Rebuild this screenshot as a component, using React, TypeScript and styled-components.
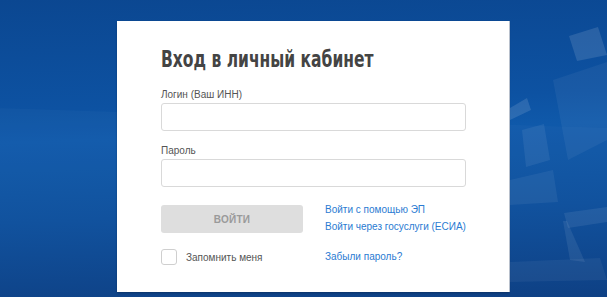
import styled, { createGlobalStyle } from "styled-components";

const GlobalStyle = createGlobalStyle`
  html, body {
    margin: 0;
    padding: 0;
  }
  body {
    font-family: "Liberation Sans", Arial, sans-serif;
  }
`;

export default function App() {
  return (
    <>
      <GlobalStyle />
      <Page>
        <Decor viewBox="0 0 607 297" preserveAspectRatio="none">
          <polygon points="0,108 607,128 607,297 0,297" fill="rgba(255,255,255,0.025)" />
          <polygon points="569,36 598,27 607,55 577,61" fill="rgba(255,255,255,0.12)" />
          <polygon points="553,80 607,62 607,140 568,160" fill="rgba(255,255,255,0.05)" />
          <polygon points="510,108 527,98 531,110 510,120" fill="rgba(255,255,255,0.12)" />
          <polygon points="522,130 544,124 550,160 526,167" fill="rgba(255,255,255,0.07)" />
          <polygon points="510,180 553,170 558,202 510,205" fill="rgba(255,255,255,0.06)" />
          <polygon points="564,213 607,207 607,222 568,228" fill="rgba(255,255,255,0.08)" />
          <polygon points="563,221 567,221 585,262 570,260" fill="rgba(255,255,255,0.08)" />
          <polygon points="510,262 600,258 607,280 510,282" fill="rgba(255,255,255,0.05)" />
        </Decor>
        <Card>
          <Title>Вход в личный кабинет</Title>
          <Field>
            <Label>Логин (Ваш ИНН)</Label>
            <Input type="text" />
          </Field>
          <Field>
            <Label>Пароль</Label>
            <Input type="password" />
          </Field>
          <Actions>
            <SubmitButton disabled>ВОЙТИ</SubmitButton>
            <LinkStack>
              <Link href="#">Войти с помощью ЭП</Link>
              <Link href="#">Войти через госуслуги (ЕСИА)</Link>
            </LinkStack>
            <Remember>
              <CheckBox />
              Запомнить меня
            </Remember>
            <Link href="#">Забыли пароль?</Link>
          </Actions>
        </Card>
      </Page>
    </>
  );
}

const Page = styled.div`
  position: relative;
  width: 607px;
  height: 297px;
  overflow: hidden;
  box-sizing: border-box;
  padding: 21px 0 0 117px;
  background: linear-gradient(
    178deg,
    #0b4791 0%,
    #0d52a2 35%,
    #0f59aa 45%,
    #0c4e9c 70%,
    #093c82 100%
  );
`;

const Decor = styled.svg`
  position: absolute;
  inset: 0;
  width: 607px;
  height: 297px;
`;

const Card = styled.div`
  position: relative;
  width: 392px;
  height: 271px;
  box-sizing: border-box;
  padding: 24px 43px 0 44px;
  background: #fff;
  box-shadow: 1px 0 0 #b8c0cc, 0 1px 2px rgba(0, 0, 0, 0.25);
`;

/* no condensed face installed: squeeze DejaVu Condensed to the reference width */
const Title = styled.h1`
  margin: 0 0 16px;
  font-family: "DejaVu Sans Condensed", "DejaVu Sans", sans-serif;
  font-weight: bold;
  font-size: 23px;
  line-height: 28px;
  color: #444;
  white-space: nowrap;
  transform: scaleX(0.75);
  transform-origin: left center;
`;

const Field = styled.div`
  display: flex;
  flex-direction: column;
  margin-bottom: 14px;
`;

const Label = styled.label`
  font-size: 10px;
  line-height: 12px;
  color: #555;
  margin-bottom: 2px;
`;

const Input = styled.input`
  width: 305px;
  height: 28px;
  box-sizing: border-box;
  border: 1px solid #d9d9d9;
  border-radius: 3px;
  outline: none;
  padding: 0 8px;
`;

const Actions = styled.div`
  display: grid;
  grid-template-columns: 142px auto;
  column-gap: 22px;
  row-gap: 16px;
  align-items: center;
  margin-top: 18px;
`;

const SubmitButton = styled.button`
  height: 28px;
  border: none;
  border-radius: 3px;
  background: #dedede;
  color: #9a9a9a;
  font-family: "Liberation Sans", Arial, sans-serif;
  font-weight: bold;
  font-size: 10px;
  letter-spacing: 0.3px;
`;

const LinkStack = styled.div`
  align-self: start;
  display: flex;
  flex-direction: column;
  gap: 5px;
  margin-top: -1px;
`;

const Link = styled.a`
  font-size: 10px;
  line-height: 12px;
  color: #2a7bd2;
  text-decoration: none;
`;

const Remember = styled.label`
  display: flex;
  align-items: center;
  gap: 9px;
  font-size: 10px;
  color: #555;
`;

const CheckBox = styled.span`
  width: 16px;
  height: 16px;
  box-sizing: border-box;
  border: 1px solid #cfcfcf;
  border-radius: 3px;
  background: #fff;
`;
